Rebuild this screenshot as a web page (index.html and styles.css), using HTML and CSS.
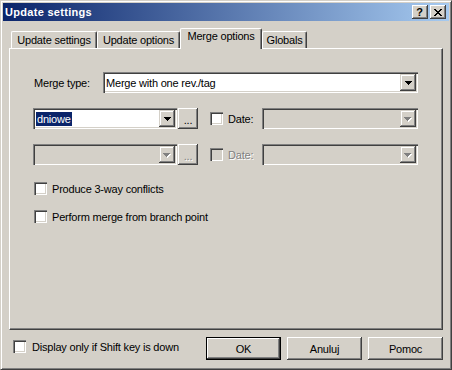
FILE: index.html
```html
<!DOCTYPE html>
<html>
<head>
<meta charset="utf-8">
<link rel="stylesheet" href="styles.css">
</head>
<body>
<div class="window">
  <div class="titlebar">
    <span class="title">Update settings</span>
    <div class="tb-buttons">
      <div class="tb-btn help">?</div>
      <div class="tb-btn close">
        <svg width="8" height="7" viewBox="0 0 8 7" shape-rendering="crispEdges"><g fill="#000"><rect x="0" y="0" width="2" height="1"/><rect x="6" y="0" width="2" height="1"/><rect x="1" y="1" width="2" height="1"/><rect x="5" y="1" width="2" height="1"/><rect x="2" y="2" width="4" height="1"/><rect x="3" y="3" width="2" height="1"/><rect x="2" y="4" width="4" height="1"/><rect x="1" y="5" width="2" height="1"/><rect x="5" y="5" width="2" height="1"/><rect x="0" y="6" width="2" height="1"/><rect x="6" y="6" width="2" height="1"/></g></svg>
      </div>
    </div>
  </div>
  <div class="client">
    <div class="tabs">
      <div class="tab t1">Update settings</div>
      <div class="tab t2">Update options</div>
      <div class="tab t3 selected">Merge options</div>
      <div class="tab t4">Globals</div>
    </div>
    <div class="panel">
      <div class="row r1">
        <span class="lbl merge-lbl">Merge type:</span>
        <div class="combo w-merge">
          <span class="val">Merge with one rev./tag</span>
          <span class="dd"><svg width="7" height="4" viewBox="0 0 7 4" shape-rendering="crispEdges"><g fill="#000"><rect x="0" y="0" width="7" height="1"/><rect x="1" y="1" width="5" height="1"/><rect x="2" y="2" width="3" height="1"/><rect x="3" y="3" width="1" height="1"/></g></svg></span>
        </div>
      </div>
      <div class="row r2">
        <div class="combo w-branch">
          <span class="val"><span class="sel">dniowe</span></span>
          <span class="dd"><svg width="7" height="4" viewBox="0 0 7 4" shape-rendering="crispEdges"><g fill="#000"><rect x="0" y="0" width="7" height="1"/><rect x="1" y="1" width="5" height="1"/><rect x="2" y="2" width="3" height="1"/><rect x="3" y="3" width="1" height="1"/></g></svg></span>
        </div>
        <div class="btn dots">...</div>
        <div class="check date-check"></div>
        <span class="lbl date-lbl">Date:</span>
        <div class="combo w-date disabled">
          <span class="val"></span>
          <span class="dd"><svg width="8" height="5" viewBox="0 0 8 5" shape-rendering="crispEdges"><g fill="#fff"><rect x="1" y="1" width="7" height="1"/><rect x="2" y="2" width="5" height="1"/><rect x="3" y="3" width="3" height="1"/><rect x="4" y="4" width="1" height="1"/></g><g fill="#808080"><rect x="0" y="0" width="7" height="1"/><rect x="1" y="1" width="5" height="1"/><rect x="2" y="2" width="3" height="1"/><rect x="3" y="3" width="1" height="1"/></g></svg></span>
        </div>
      </div>
      <div class="row r3">
        <div class="combo w-branch disabled">
          <span class="val"></span>
          <span class="dd"><svg width="8" height="5" viewBox="0 0 8 5" shape-rendering="crispEdges"><g fill="#fff"><rect x="1" y="1" width="7" height="1"/><rect x="2" y="2" width="5" height="1"/><rect x="3" y="3" width="3" height="1"/><rect x="4" y="4" width="1" height="1"/></g><g fill="#808080"><rect x="0" y="0" width="7" height="1"/><rect x="1" y="1" width="5" height="1"/><rect x="2" y="2" width="3" height="1"/><rect x="3" y="3" width="1" height="1"/></g></svg></span>
        </div>
        <div class="btn dots disabled-text">...</div>
        <div class="check date-check disabled"></div>
        <span class="lbl date-lbl disabled-text">Date:</span>
        <div class="combo w-date disabled">
          <span class="val"></span>
          <span class="dd"><svg width="8" height="5" viewBox="0 0 8 5" shape-rendering="crispEdges"><g fill="#fff"><rect x="1" y="1" width="7" height="1"/><rect x="2" y="2" width="5" height="1"/><rect x="3" y="3" width="3" height="1"/><rect x="4" y="4" width="1" height="1"/></g><g fill="#808080"><rect x="0" y="0" width="7" height="1"/><rect x="1" y="1" width="5" height="1"/><rect x="2" y="2" width="3" height="1"/><rect x="3" y="3" width="1" height="1"/></g></svg></span>
        </div>
      </div>
      <div class="row crow c1">
        <div class="check"></div>
        <span class="lbl">Produce 3-way conflicts</span>
      </div>
      <div class="row crow c2">
        <div class="check"></div>
        <span class="lbl">Perform merge from branch point</span>
      </div>
    </div>
    <div class="bottom">
      <div class="shift">
        <div class="check"></div>
        <span class="lbl">Display only if Shift key is down</span>
      </div>
      <div class="buttons">
        <div class="btn push default">OK</div>
        <div class="btn push">Anuluj</div>
        <div class="btn push">Pomoc</div>
      </div>
    </div>
  </div>
</div>
</body>
</html>
```
FILE: styles.css
```css
html, body {
  margin: 0;
  padding: 0;
  background: #d4d0c8;
}
body {
  font-family: "Liberation Sans", Arial, sans-serif;
  font-size: 11px;
  letter-spacing: -0.2px;
  color: #000;
}
.window {
  width: 452px;
  height: 370px;
  box-sizing: border-box;
  background: #d4d0c8;
  border: 1px solid;
  border-color: #d4d0c8 #404040 #404040 #d4d0c8;
  box-shadow: inset 1px 1px #fff, inset -1px -1px #808080;
  padding: 2px;
  display: flex;
  flex-direction: column;
}
.titlebar {
  height: 18px;
  flex: none;
  display: flex;
  align-items: center;
  background: linear-gradient(to right, #0a246a, #a6caf0);
  color: #fff;
  font-weight: bold;
  padding-left: 2px;
}
.title {
  flex: 1;
  font-size: 11px;
  letter-spacing: 0.3px;
}
.tb-buttons {
  display: flex;
  gap: 2px;
  margin-right: 3px;
}
.tb-btn {
  width: 16px;
  height: 14px;
  box-sizing: border-box;
  background: #d4d0c8;
  box-shadow: inset -1px -1px #404040, inset 1px 1px #fff, inset -2px -2px #808080;
  display: flex;
  align-items: center;
  justify-content: center;
  color: #000;
  font-weight: bold;
  font-size: 11px;
  line-height: 12px;
  letter-spacing: 0;
}
.tb-btn.help {
  padding-right: 1px;
}
.tb-btn.close svg {
  margin-right: 1px;
}
.client {
  flex: 1;
  display: flex;
  flex-direction: column;
  padding: 0 6px;
}
.tabs {
  height: 27px;
  flex: none;
  display: flex;
  align-items: flex-end;
  padding-left: 2px;
  position: relative;
  z-index: 1;
}
.tab {
  height: 17px;
  box-sizing: border-box;
  border-top: 1px solid #fff;
  border-left: 1px solid #fff;
  border-right: 1px solid #404040;
  box-shadow: inset -1px 0 #808080;
  border-radius: 2px 2px 0 0;
  text-align: center;
  line-height: 15px;
  padding-top: 1px;
  background: #d4d0c8;
  white-space: nowrap;
}
.t1 { width: 86px; }
.t2 { width: 83px; }
.t3 { width: 82px; }
.t4 { width: 45px; }
.tab.selected {
  height: 21px;
  margin-bottom: -1px;
  line-height: 14px;
  padding-top: 0;
}
.panel {
  height: 282px;
  flex: none;
  box-sizing: border-box;
  border: 1px solid;
  border-color: #fff #404040 #404040 #fff;
  box-shadow: inset -1px -1px #808080;
  padding: 23px 0 0 23px;
  display: flex;
  flex-direction: column;
}
.row {
  display: flex;
  align-items: center;
}
.r1 { height: 21px; }
.r2 { height: 21px; margin-top: 15px; }
.r3 { height: 21px; margin-top: 15px; }
.crow { height: 13px; }
.c1 { margin-top: 17px; padding-left: 1px; }
.c2 { margin-top: 15px; padding-left: 1px; }
.crow .lbl { margin-left: 5px; }
.lbl {
  white-space: nowrap;
}
.merge-lbl {
  width: 70px;
  flex: none;
  padding-left: 1px;
  box-sizing: border-box;
}
.combo {
  height: 21px;
  box-sizing: border-box;
  background: #fff;
  box-shadow: inset 1px 1px #808080, inset 2px 2px #404040, inset -1px -1px #fff, inset -2px -2px #d4d0c8;
  display: flex;
  align-items: center;
  padding: 2px;
  flex: none;
}
.combo.disabled {
  background: #d4d0c8;
}
.combo .val {
  flex: 1;
  padding-left: 1px;
  white-space: nowrap;
  overflow: hidden;
  line-height: 14px;
}
.sel {
  background: #0a246a;
  color: #fff;
  padding: 0 1px;
  display: inline-block;
  line-height: 14px;
}
.dd {
  width: 16px;
  height: 17px;
  flex: none;
  box-sizing: border-box;
  background: #d4d0c8;
  box-shadow: inset -1px -1px #404040, inset 1px 1px #d4d0c8, inset -2px -2px #808080, inset 2px 2px #fff;
  display: flex;
  align-items: center;
  justify-content: center;
}
.dd svg {
  margin-top: 1px;
}
.w-merge { width: 315px; }
.w-branch { width: 144px; }
.w-date { width: 156px; }
.btn {
  box-sizing: border-box;
  background: #d4d0c8;
  box-shadow: inset -1px -1px #404040, inset 1px 1px #fff, inset -2px -2px #808080;
  display: flex;
  align-items: center;
  justify-content: center;
  flex: none;
}
.dots {
  width: 20px;
  height: 21px;
  margin-left: 1px;
  padding-top: 3px;
}
.check {
  width: 13px;
  height: 13px;
  box-sizing: border-box;
  flex: none;
  background: #fff;
  box-shadow: inset 1px 1px #808080, inset 2px 2px #404040, inset -1px -1px #fff, inset -2px -2px #d4d0c8;
}
.check.disabled {
  background: #d4d0c8;
}
.date-check {
  margin-left: 12px;
}
.date-lbl {
  width: 39px;
  flex: none;
  padding-left: 5px;
  box-sizing: border-box;
}
.disabled-text {
  color: #808080;
  text-shadow: 1px 1px 0 #fff;
}
.bottom {
  flex: 1;
  display: flex;
  align-items: flex-start;
  padding-top: 7px;
}
.shift {
  display: flex;
  align-items: center;
  margin-left: 4px;
  margin-top: 3px;
  height: 13px;
}
.shift .lbl {
  margin-left: 6px;
}
.buttons {
  margin-left: auto;
  display: flex;
  gap: 6px;
}
.push {
  width: 75px;
  height: 23px;
  padding-top: 1px;
}
.push.default {
  border: 1px solid #000;
  box-shadow: inset -1px -1px #404040, inset 1px 1px #fff, inset -2px -2px #808080;
}
```
